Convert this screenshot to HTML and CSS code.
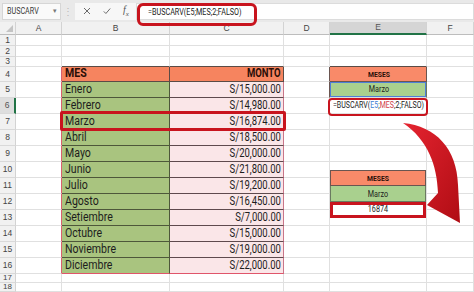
FILE: index.html
```html
<!DOCTYPE html>
<html lang="es">
<head>
    <meta charset="UTF-8">
    <meta name="viewport" content="width=device-width, initial-scale=1">
    <link rel="stylesheet" href="styles.css">
</head>
<body>
<div class="page">

    <!-- formula bar -->
    <div class="bar">
        <div class="namebox"><span class="nb">BUSCARV</span><span class="caret">&#9662;</span></div>
        <div class="dots">&#8942;</div>
        <div class="tools">
            <svg class="ico" viewBox="0 0 8 8"><path d="M1 1L7 7M7 1L1 7" stroke="#6b6b6b" stroke-width="1" fill="none"/></svg>
            <svg class="ico" viewBox="0 0 8 8"><path d="M0.8 4.4L2.9 6.5L7.2 1.5" stroke="#6b6b6b" stroke-width="1" fill="none"/></svg>
            <span class="fx">f<sub>x</sub></span>
        </div>
        <div class="input"><span class="ftext">=BUSCARV(E5;MES;2;FALSO)</span></div>
    </div>

    <table class="sheet">
        <colgroup>
            <col class="w-rh"><col class="w-a"><col class="w-b"><col class="w-c"><col class="w-d"><col class="w-e"><col>
        </colgroup>
        <tr class="r-hd"><th class="corner"><span class="tri"></span></th><th>A</th><th>B</th><th>C</th><th>D</th><th class="sel-col">E</th><th>F</th></tr>
        <tr class="r11"><th>1</th><td></td><td></td><td></td><td></td><td></td><td></td></tr>
        <tr class="r11"><th>2</th><td></td><td></td><td></td><td></td><td></td><td></td></tr>
        <tr class="r10"><th>3</th><td></td><td class="tt"></td><td class="tt"></td><td></td><td class="tt"></td><td></td></tr>
        <tr class="r15"><th>4</th><td class="tl"></td><td class="hd"><span class="txt">MES</span></td><td class="hd right"><span class="num">MONTO</span></td><td class="el"></td><td class="e-head"><span class="mid">MESES</span></td><td></td></tr>
        <tr class="r16"><th>5</th><td class="tl"></td><td class="m"><span class="txt">Enero</span></td><td class="v"><span class="num">S/15,000.00</span></td><td class="el"></td><td class="e-green"><span class="mid">Marzo</span></td><td></td></tr>
        <tr class="r16"><th class="sel-row">6</th><td class="tl"></td><td class="m"><span class="txt">Febrero</span></td><td class="v"><span class="num">S/14,980.00</span></td><td></td><td class="e-form"><span class="ref">=BUSCARV(<b class="blue">E5</b>;<b class="red">MES</b>;2;FALSO)</span></td><td></td></tr>
        <tr class="r16"><th>7</th><td class="tl"></td><td class="m"><span class="txt">Marzo</span></td><td class="v"><span class="num">S/16,874.00</span></td><td></td><td></td><td></td></tr>
        <tr class="r16"><th>8</th><td class="tl"></td><td class="m"><span class="txt">Abril</span></td><td class="v"><span class="num">S/18,500.00</span></td><td></td><td></td><td></td></tr>
        <tr class="r16"><th>9</th><td class="tl"></td><td class="m"><span class="txt">Mayo</span></td><td class="v"><span class="num">S/20,000.00</span></td><td></td><td></td><td></td></tr>
        <tr class="r16"><th>10</th><td class="tl"></td><td class="m"><span class="txt">Junio</span></td><td class="v"><span class="num">S/21,800.00</span></td><td></td>
            <td rowspan="4" class="holder">
                <div class="lookup">
                    <div class="lk-head"><span class="mid">MESES</span></div>
                    <div class="lk-green"><span class="mid">Marzo</span></div>
                    <div class="lk-result"><span class="mid">16874</span></div>
                </div>
            </td>
            <td></td></tr>
        <tr class="r16"><th>11</th><td class="tl"></td><td class="m"><span class="txt">Julio</span></td><td class="v"><span class="num">S/19,200.00</span></td><td></td><td></td></tr>
        <tr class="r16"><th>12</th><td class="tl"></td><td class="m"><span class="txt">Agosto</span></td><td class="v"><span class="num">S/16,450.00</span></td><td></td><td></td></tr>
        <tr class="r16"><th>13</th><td class="tl"></td><td class="m"><span class="txt">Setiembre</span></td><td class="v"><span class="num">S/7,000.00</span></td><td></td><td></td></tr>
        <tr class="r16"><th>14</th><td class="tl"></td><td class="m"><span class="txt">Octubre</span></td><td class="v"><span class="num">S/15,000.00</span></td><td></td><td></td><td></td></tr>
        <tr class="r16"><th>15</th><td class="tl"></td><td class="m"><span class="txt">Noviembre</span></td><td class="v"><span class="num">S/19,000.00</span></td><td></td><td></td><td></td></tr>
        <tr class="r16"><th>16</th><td class="tl"></td><td class="m last"><span class="txt">Diciembre</span></td><td class="v last"><span class="num">S/22,000.00</span></td><td></td><td></td><td></td></tr>
        <tr class="r9"><th>17</th><td></td><td></td><td></td><td></td><td></td><td></td></tr>
        <tr class="r9"><th>18</th><td></td><td></td><td></td><td></td><td></td><td></td></tr>
    </table>

    <!-- red annotations drawn over the sheet -->
    <div class="mark mark-bar"></div>
    <div class="mark mark-row"></div>
    <div class="mark mark-cell"></div>

    <svg class="arrow" viewBox="0 0 474 292">
        <defs>
            <linearGradient id="red" x1="0" y1="0" x2="1" y2="1">
                <stop offset="0" stop-color="#e52430"/>
                <stop offset="1" stop-color="#b00d14"/>
            </linearGradient>
        </defs>
        <path d="M403 123 C436 126 457 149 458 185 L460 223 L427 205 L438 193 C437 165 428 140 403 123 Z" fill="url(#red)"/>
    </svg>
</div>
</body>
</html>
```

FILE: styles.css
```css
* {
    box-sizing: border-box;
}

body {
    margin: 0;
    background: #fff;
    font-family: Roboto, "Liberation Sans", sans-serif;
    color: #1d1d1d;
}

.page {
    position: relative;
    width: 474px;
    height: 292px;
    overflow: hidden;
}

/* formula bar */
.bar {
    display: flex;
    align-items: center;
    height: 22px;
    padding: 2px 0 2px 2px;
    background: #e9e9e9;
}

.namebox {
    display: flex;
    align-items: center;
    justify-content: space-between;
    width: 59px;
    height: 17px;
    padding: 0 3px 0 4px;
    background: #fafafa;
    border: 1px solid #d6d6d6;
    font-size: 9px;
    color: #3a3a3a;
}

.nb {
    display: inline-block;
    transform: scaleX(.8);
    transform-origin: left center;
}

.caret {
    font-size: 7px;
    color: #777;
}

.dots {
    width: 14px;
    text-align: center;
    font-size: 10px;
    color: #b9b9b9;
}

.tools {
    display: flex;
    align-items: center;
    gap: 12px;
    width: 61px;
    height: 17px;
    padding-left: 8px;
    background: #f7f7f7;
}

.ico {
    width: 8px;
    height: 8px;
}

.fx {
    font-family: "Liberation Serif", serif;
    font-style: italic;
    font-size: 10px;
    color: #555;
}

.fx sub {
    font-size: 7px;
}

.input {
    flex: 1;
    height: 17px;
    padding-left: 11px;
    background: #fff;
    border: 1px solid #dcdcdc;
    line-height: 15px;
    font-size: 9.5px;
    color: #222;
}

.ftext {
    display: inline-block;
    transform: scaleX(.76);
    transform-origin: left center;
}

/* sheet */
.sheet {
    width: 474px;
    table-layout: fixed;
    border-collapse: separate;
    border-spacing: 0;
}

.w-rh { width: 16px; }
.w-a { width: 46px; }
.w-b { width: 108px; }
.w-c { width: 114px; }
.w-d { width: 46px; }
.w-e { width: 97px; }

.sheet th {
    padding: 0;
    background: #f1f1f1;
    border-right: 1px solid #d3d3d3;
    border-bottom: 1px solid #d9d9d9;
    font-family: "Liberation Sans", sans-serif;
    font-weight: normal;
    font-size: 8.5px;
    line-height: 9px;
    color: #444;
    text-align: center;
    vertical-align: middle;
}

.sheet td {
    padding: 0 2px 1px 3px;
    border-right: 1px solid #e0e0e0;
    border-bottom: 1px solid #e0e0e0;
    font-size: 12px;
    line-height: 13px;
    vertical-align: bottom;
    white-space: nowrap;
    overflow: visible;
}

.r-hd { height: 13px; }
.r-hd th { border-bottom: 1px solid #bdbdbd; }
.r9 { height: 9px; }
.r10 { height: 10px; }
.r11 { height: 11px; }
.r15 { height: 15px; }
.r16 { height: 16px; }

.r9 th {
    font-size: 8px;
    line-height: 8px;
}

.corner {
    position: relative;
}

.tri {
    position: absolute;
    right: 2px;
    bottom: 2px;
    border-left: 7px solid transparent;
    border-bottom: 7px solid #c4c4c4;
}

.sheet th.sel-col {
    background: #d5d5d5;
    border-bottom: 2px solid #217346;
    color: #555;
}

.sheet th.sel-row {
    background: #dedede;
    border-right: 2px solid #217346;
    color: #555;
}

/* data table B4:C16 */
.sheet td.tt { border-bottom-color: #5b4b45; }
.sheet td.tl { border-right-color: #d9606d; }

.sheet td.hd {
    background: #f6845f;
    border-right-color: #5b4b45;
    border-bottom-color: #5b4b45;
    font-weight: bold;
    color: #2a0f08;
}

.sheet td.m {
    background: #a9c47f;
    border-right-color: #4e573a;
    border-bottom-color: #4e573a;
}

.sheet td.v {
    background: #fae6e8;
    border-right-color: #c9768a;
    border-bottom-color: #5e4a4e;
    text-align: right;
}

.sheet td.right {
    text-align: right;
}

.sheet td.last {
    border-bottom-color: #e0556a;
}

.txt {
    display: inline-block;
    transform: scaleX(.88);
    transform-origin: left bottom;
}

.num {
    display: inline-block;
    transform: scaleX(.79);
    transform-origin: right bottom;
}

/* lookup blocks in column E */
.mid {
    display: inline-block;
    transform: scaleX(.85);
}

.sheet td.el { border-right-color: #6a5550; }

.sheet td.e-head {
    background: #f98a69;
    border-right-color: #6a5550;
    border-bottom-color: #6a5550;
    text-align: center;
    font-size: 8px;
    font-weight: bold;
    line-height: 10px;
    color: #2a0f08;
}

.sheet td.e-green {
    background: #a9d08e;
    border-right-color: #6a7a60;
    box-shadow: inset 0 0 0 1px #4f7fd8;
    text-align: center;
    font-size: 8.5px;
    line-height: 11px;
    padding-bottom: 2px;
}

.sheet td.e-form {
    padding: 0 0 2px 3px;
    font-size: 9px;
    line-height: 11px;
}

.ref {
    display: inline-block;
    transform: scaleX(.78);
    transform-origin: left bottom;
}

.ref b {
    font-weight: normal;
}

.blue { color: #3b7fd3; }
.red { color: #d1404a; }

.sheet td.holder {
    padding: 8px 0 0;
    vertical-align: top;
}

.lookup {
    display: flex;
    flex-direction: column;
    text-align: center;
    font-size: 8.5px;
    line-height: 11px;
}

.lookup > div {
    display: flex;
    align-items: flex-end;
    justify-content: center;
    height: 16px;
    padding-bottom: 1px;
}

.lk-head {
    background: #f98a69;
    border: 1px solid #6a5550;
    font-weight: bold;
    font-size: 8px;
    color: #2a0f08;
}

.lk-green {
    background: #a9d08e;
    border: 1px solid #6a7a60;
    border-top: 0;
}

.lookup > .lk-result {
    background: #fff;
    border: 3px solid #c8141e;
    padding-bottom: 0;
}

/* annotations */
.mark {
    position: absolute;
    border: 3px solid #c8141e;
}

.mark-bar {
    left: 137px;
    top: 3px;
    width: 120px;
    height: 23px;
    border-radius: 6px;
}

.mark-row {
    left: 60px;
    top: 111px;
    width: 226px;
    height: 20px;
    border-radius: 2px;
}

.mark-cell {
    left: 328px;
    top: 98px;
    width: 100px;
    height: 18px;
    border-width: 2.5px;
    border-radius: 4px;
}

.arrow {
    position: absolute;
    left: 0;
    top: 0;
    width: 474px;
    height: 292px;
    pointer-events: none;
}
```
